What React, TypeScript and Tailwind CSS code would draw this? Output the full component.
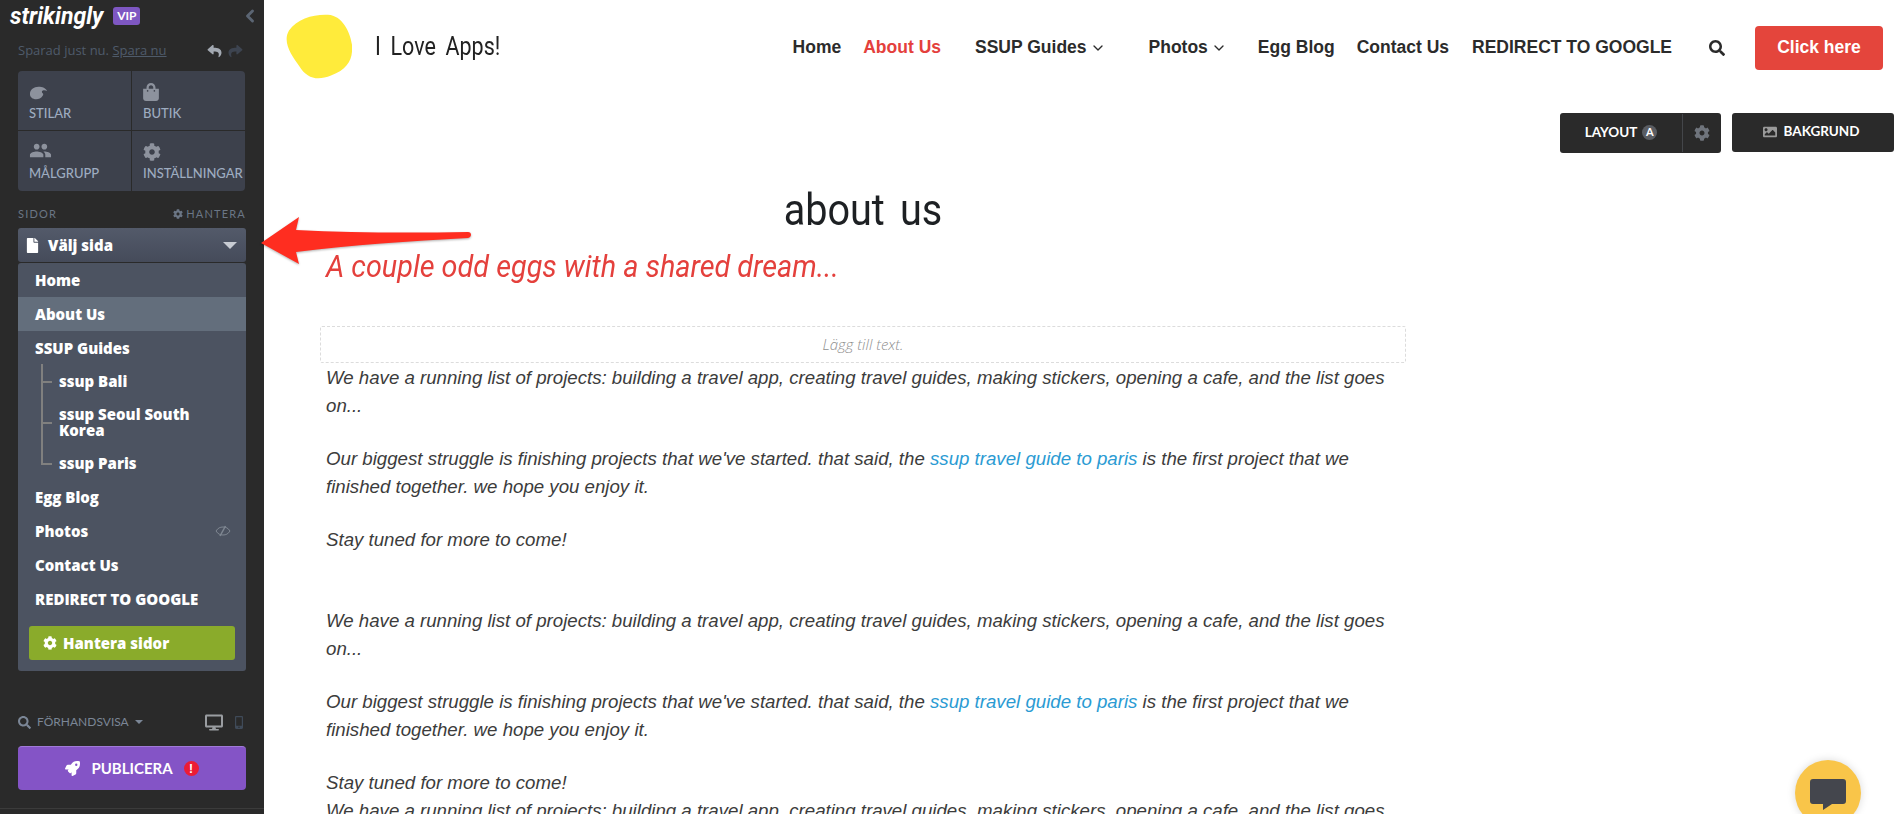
import { ChevronDown, ChevronLeft } from "lucide-react";
import {
  FaCog,
  FaDesktop,
  FaFile,
  FaImage,
  FaMobileAlt,
  FaReply,
  FaRocket,
  FaSearch,
  FaShare,
  FaShoppingBag,
} from "react-icons/fa";
import { MdPeople } from "react-icons/md";

const lato = "font-['Lato',sans-serif]";
const openSans = "font-['Open_Sans',sans-serif]";
const arial = "font-['Liberation_Sans',Arial,sans-serif]";
const display = "font-['Roboto',sans-serif]";

function PaletteIcon() {
  return (
    <svg viewBox="0 0 20 14" className="h-[14px] w-[19px]" fill="currentColor">
      <path d="M1 8C1 3.500 5 .5 10 .5c4 0 8 1.500 9 4.500-1.500-1-3.500-1.200-4.800-.4-1 .7-.7 2 .2 2.600.9.7.7 2-.2 3-1.400 2.400-4 3.300-6.600 3.300C3.800 13.500 1 11.500 1 8z" />
    </svg>
  );
}

function EyeOffIcon() {
  return (
    <svg viewBox="0 0 16 12" className="h-[12px] w-[16px]" fill="none" stroke="#7f8792" strokeWidth="1">
      <path d="M1 6c2-3 4-4 7-4s5 1 7 4c-2 3-4 4-7 4S3 9 1 6z" />
      <path d="M5 11L10.500 1" strokeWidth="1.500" />
    </svg>
  );
}

function Tile({ icon, label, className }: { icon: React.ReactNode; label: string; className: string }) {
  return (
    <div className={`flex h-[60px] flex-col pl-[11px] text-[#9eacc0] ${className}`}>
      <div className="flex h-[34px] items-end pb-[5px] text-[#8d929d]">{icon}</div>
      <span className={`${lato} text-[13px] leading-[16px] font-medium whitespace-nowrap`}>{label}</span>
    </div>
  );
}

function PageRow({ label, active, sub, hidden, tall }: { label: string; active?: boolean; sub?: boolean; hidden?: boolean; tall?: boolean }) {
  return (
    <div
      className={`flex items-center justify-between pr-[15px] ${tall ? "h-[48px]" : "h-[34px]"} ${sub ? "pl-[41px]" : "pl-[17px]"} ${
        active ? "bg-[#636e7c]" : ""
      }`}
    >
      <span className="pr-[30px] text-[15px] leading-[16px] font-extrabold text-white">{label}</span>
      {hidden && <EyeOffIcon />}
    </div>
  );
}

function Sidebar() {
  return (
    <aside className="flex h-[814px] w-[264px] shrink-0 flex-col bg-[#2a2a2a]">
      <div className="flex h-[32px] items-center pr-[4px] pl-[10px]">
        <span className={`${display} text-[23px] leading-none font-bold text-white italic`}>strikingly</span>
        <span className={`${lato} ml-[10px] flex h-[18px] w-[27px] items-center justify-center rounded-[3px] bg-[#7e57c2] text-[12px] font-bold text-white`}>
          VIP
        </span>
        <ChevronLeft className="ml-auto h-[20px] w-[20px] text-[#5b6573]" strokeWidth={3.500} />
      </div>

      <div className="mt-[9px] flex h-[20px] items-center pr-[21px] pl-[18px]">
        <span className={`${openSans} text-[13px] text-[#4f5b6a]`}>
          Sparad just nu. <span className="underline">Spara nu</span>
        </span>
        <FaReply className="ml-auto h-[14px] w-[15px] text-[#a3a9b2]" />
        <FaShare className="ml-[6px] h-[14px] w-[15px] text-[#3d4450]" />
      </div>

      <div className="mx-[18px] mt-[10px] grid h-[120px] w-[227px] grid-cols-[114px_113px] overflow-hidden rounded-[4px] bg-[#3d414c]">
        <Tile icon={<PaletteIcon />} label="STILAR" className="border-r border-b border-[#2a2a2a]" />
        <Tile icon={<FaShoppingBag className="mb-[-1px] h-[18px] w-[16px]" />} label="BUTIK" className="border-b border-[#2a2a2a]" />
        <Tile icon={<MdPeople className="mb-[-2px] h-[23px] w-[23px]" />} label="MÅLGRUPP" className="border-r border-[#2a2a2a]" />
        <Tile icon={<FaCog className="mb-[-1px] h-[18px] w-[18px]" />} label="INSTÄLLNINGAR" className="" />
      </div>

      <div className={`${lato} mt-[16px] flex h-[14px] items-center justify-between pr-[18px] pl-[18px] text-[11px] tracking-[1.200px] text-[#6b7685]`}>
        <span>SIDOR</span>
        <span className="flex items-center gap-[3px]">
          <FaCog className="h-[10px] w-[10px]" />
          HANTERA
        </span>
      </div>

      <div className={`${openSans} mx-[18px] mt-[7px] flex h-[34px] w-[228px] items-center rounded-[3px] bg-gradient-to-b from-[#535a6a] to-[#454b5a] pr-[9px] pl-[8px] text-white`}>
        <FaFile className="h-[15px] w-[13px]" />
        <span className="ml-[9px] text-[15px] font-extrabold">Välj sida</span>
        <span className="ml-auto h-0 w-0 border-x-[7px] border-t-[7px] border-x-transparent border-t-[#c8ccd3]" />
      </div>

      <div className={`${openSans} relative mx-[18px] mt-[1px] w-[228px] rounded-[3px] bg-[#4c5361]`}>
        <PageRow label="Home" />
        <PageRow label="About Us" active />
        <PageRow label="SSUP Guides" />
        <div className="relative -mt-[1px]">
          <PageRow label="ssup Bali" sub />
          <PageRow label="ssup Seoul South Korea" sub tall />
          <PageRow label="ssup Paris" sub />
          <div className="absolute top-0 bottom-[15px] left-[23px] w-[2px] bg-[#80807f]" />
          <div className="absolute top-[17px] left-[23px] h-[2px] w-[11px] bg-[#80807f]" />
          <div className="absolute top-[58px] left-[23px] h-[2px] w-[11px] bg-[#80807f]" />
          <div className="absolute top-[99px] left-[23px] h-[2px] w-[11px] bg-[#80807f]" />
        </div>
        <PageRow label="Egg Blog" />
        <PageRow label="Photos" hidden />
        <PageRow label="Contact Us" />
        <PageRow label="REDIRECT TO GOOGLE" />
        <div className="px-[11px] pt-[10px] pb-[11px]">
          <div className="flex h-[34px] items-center rounded-[3px] bg-[#8aab2b] pl-[14px] text-white">
            <FaCog className="h-[14px] w-[14px]" />
            <span className="ml-[6px] text-[15px] font-extrabold">Hantera sidor</span>
          </div>
        </div>
      </div>

      <div className={`${lato} mt-[42px] flex h-[18px] items-center pr-[21px] pl-[18px] text-[#7b8696]`}>
        <FaSearch className="h-[13px] w-[13px]" />
        <span className="ml-[6px] text-[12px]">FÖRHANDSVISA</span>
        <span className="ml-[6px] h-0 w-0 border-x-[4px] border-t-[4px] border-x-transparent border-t-[#7b8696]" />
        <FaDesktop className="ml-auto h-[17px] w-[18px] text-[#9a9da1]" />
        <FaMobileAlt className="ml-[12px] h-[13px] w-[8px] text-[#3f4a58]" />
      </div>

      <div className={`${lato} mx-[18px] mt-[15px] flex h-[44px] w-[228px] items-center justify-center rounded-[4px] border-t border-[#a07ad8] bg-[#8454c6] text-white`}>
        <FaRocket className="h-[15px] w-[15px]" />
        <span className="ml-[11px] text-[15px] font-bold">PUBLICERA</span>
        <span className={`${arial} ml-[11px] flex h-[15px] w-[15px] items-center justify-center rounded-full bg-[#ec1c35] text-[12px] font-bold`}>!</span>
      </div>

      <div className="mt-[18px] h-px bg-[#3b3b3b]" />
    </aside>
  );
}

function NavBar() {
  const item = "text-[17.500px] font-bold whitespace-nowrap text-[#2b2b2b]";
  return (
    <header className={`${arial} flex h-[93px] items-center pr-[18px] pl-[22px]`}>
      <svg viewBox="0 0 66 88" className="h-[66px] w-[66px] shrink-0" preserveAspectRatio="none">
        <path d="M3 22C11 6 28 0 42 1c14 1 22 22 24 40 1 18-3 32-21 41-13 7-24 5-32-13C6 56-4 38 3 22z" fill="#ffeb3b" />
      </svg>
      <span className={`${display} ml-[23px] origin-left scale-x-[0.86] text-[25px] [word-spacing:5px] text-[#222]`}>I Love Apps!</span>
      <nav className="ml-auto flex items-center pt-[2px]">
        <span className={item}>Home</span>
        <span className={`${item} ml-[22px] !text-[#e4403c]`}>About Us</span>
        <span className={`${item} ml-[34px]`}>SSUP Guides</span>
        <ChevronDown className="ml-[3px] h-[16px] w-[16px] text-[#2b2b2b]" strokeWidth={2} />
        <span className={`${item} ml-[43px]`}>Photos</span>
        <ChevronDown className="ml-[3px] h-[16px] w-[16px] text-[#2b2b2b]" strokeWidth={2} />
        <span className={`${item} ml-[31px]`}>Egg Blog</span>
        <span className={`${item} ml-[22px]`}>Contact Us</span>
        <span className={`${item} ml-[23px]`}>REDIRECT TO GOOGLE</span>
        <FaSearch className="ml-[37px] h-[16px] w-[16px] text-[#2b2b2b]" />
        <span className="ml-[30px] flex h-[44px] w-[128px] items-center justify-center rounded-[4px] bg-[#e4453c] text-[17.500px] font-bold text-white">
          Click here
        </span>
      </nav>
    </header>
  );
}

function Toolbar() {
  return (
    <div className={`${lato} mt-[20px] flex justify-end gap-[11px] pr-[7px] text-[13.500px] font-bold text-white`}>
      <div className="flex h-[40px] w-[161px] items-center rounded-[3px] bg-[#2a2a2a]">
        <div className="flex flex-1 items-center justify-center gap-[5px] pb-[2px]">
          LAYOUT
          <span className="flex h-[15px] w-[15px] items-center justify-center rounded-full bg-[#5a5d63] text-[11px]">A</span>
        </div>
        <div className="flex h-[38px] w-[39px] items-center justify-center border-l border-[#44464a]">
          <FaCog className="h-[16px] w-[16px] text-[#6f747c]" />
        </div>
      </div>
      <div className="flex h-[39px] w-[162px] items-center justify-center gap-[7px] rounded-[3px] bg-[#2a2a2a] pr-[4px] pb-[2px]">
        <FaImage className="h-[14px] w-[14px] text-[#9a9a9a]" />
        BAKGRUND
      </div>
    </div>
  );
}

function Paragraphs() {
  return (
    <>
      <p>We have a running list of projects: building a travel app, creating travel guides, making stickers, opening a cafe, and the list goes on...</p>
      <p className="mt-[25px]">
        Our biggest struggle is finishing projects that we've started. that said, the{" "}
        <span className="text-[#2b9bd3]">ssup travel guide to paris</span> is the first project that we finished together. we hope you enjoy it.
      </p>
      <p className="mt-[25px]">Stay tuned for more to come!</p>
    </>
  );
}

export default function App() {
  return (
    <div className="relative flex h-[814px] w-[1901px] overflow-hidden bg-white">
      <Sidebar />
      <main className="h-[814px] flex-1 overflow-hidden">
        <NavBar />
        <Toolbar />
        <section className="ml-[56px] w-[1086px]">
          <h1 className={`${display} mt-[33px] scale-x-[0.9] text-center text-[44px] leading-[48px] font-normal [word-spacing:6px] text-[#1d2023]`}>about us</h1>
          <h2 className={`${display} mt-[14px] ml-[6px] origin-left scale-x-[0.9] text-[32px] leading-[36px] font-normal text-[#e4403c] italic`}>A couple odd eggs with a shared dream...</h2>
          <div className={`${openSans} mt-[42px] flex h-[37px] items-center justify-center rounded-[2px] border border-dashed border-[#dcdcdc] text-[15px] font-light text-[#8f8f8f] italic`}>
            Lägg till text.
          </div>
          <div className={`${arial} px-[6px] pt-[1px] text-[18.660px] leading-[28px] text-[#3c3c3c] italic`}>
            <Paragraphs />
            <div className="mt-[53px]">
              <Paragraphs />
            </div>
            <p>We have a running list of projects: building a travel app, creating travel guides, making stickers, opening a cafe, and the list goes on...</p>
          </div>
        </section>
      </main>

      {/* annotation arrow over the page */}
      <svg viewBox="0 0 216 52" className="absolute top-[215px] left-[258px] h-[52px] w-[216px] drop-shadow-[0_1px_1px_rgba(0,0,0,0.3)]">
        <path d="M3 28L41 2l-3 13c58 3 116 3 172 2 4 0 4 5 0 6-58 3-116 7-172 14l3 12z" fill="#ff2d20" />
      </svg>

      {/* chat launcher */}
      <div className="absolute top-[760px] left-[1795px] flex h-[66px] w-[66px] items-start justify-center rounded-full bg-[#f9c549] pt-[19px] shadow-[0_0_8px_rgba(0,0,0,0.15)]">
        <svg viewBox="0 0 36 32" className="h-[32px] w-[36px]" fill="#44464d">
          <path d="M3 0h30a3 3 0 013 3v19a3 3 0 01-3 3H22l-9 6v-6H3a3 3 0 01-3-3V3a3 3 0 013-3z" />
        </svg>
      </div>
    </div>
  );
}
